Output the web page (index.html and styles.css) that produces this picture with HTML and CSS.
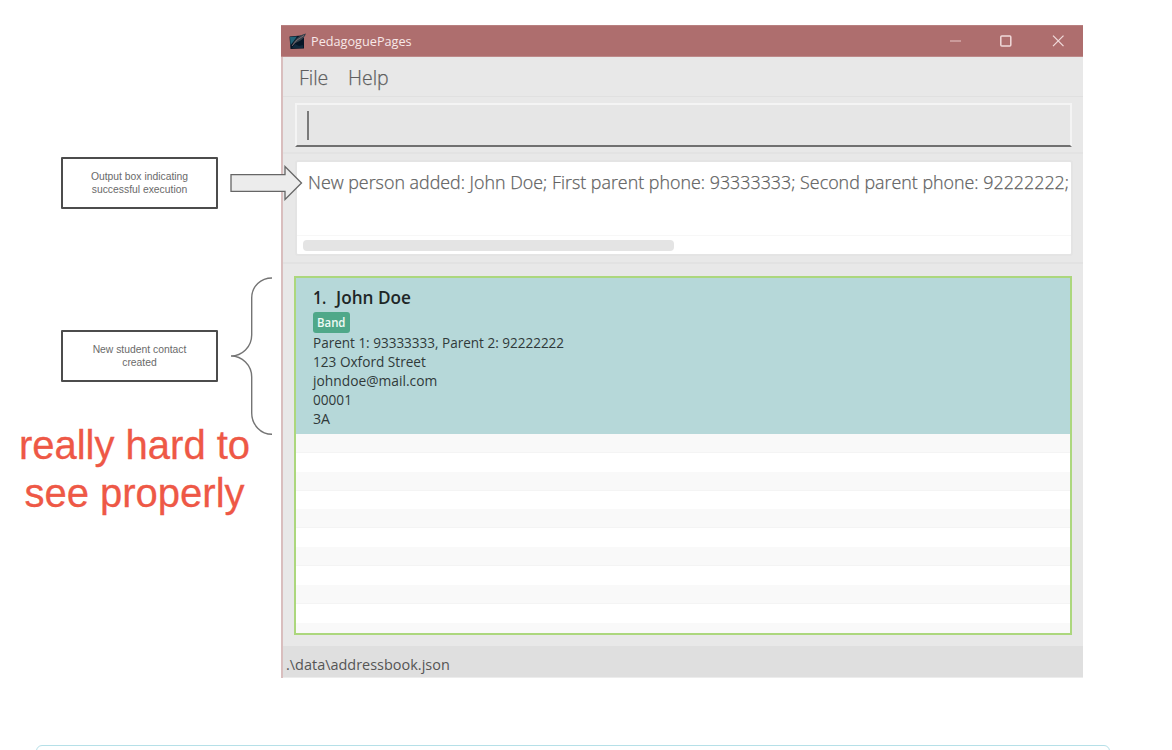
FILE: index.html
```
<!DOCTYPE html>
<html lang="en">
<head>
<meta charset="utf-8">
<title>PedagoguePages</title>
<link rel="stylesheet" href="styles.css">
</head>
<body>
<main class="page">
  <aside class="notes">
    <div class="note">Output box indicating<br>successful execution</div>
    <div class="note">New student contact<br>created</div>
    <p class="remark">really hard to<br>see properly</p>
  </aside>
  <section class="window">
    <header class="titlebar">
      <svg class="logo" width="18" height="17" viewBox="0 0 18 17">
        <path d="M0.5 3.5L12 2.5L15 5V15.5L1.5 16Z" fill="#061526"/>
        <path d="M1 4L8 3.5L4 9L1.6 12Z" fill="#236377"/>
        <path d="M3 15L6 11L10 13L14 12V15Z" fill="#10283c"/>
        <path d="M3 13C5 7 10 2 17 0.5C15 6 10 9 6 10Z" fill="#343f49"/>
        <path d="M3 13L8 7L15 2.5" fill="none" stroke="#9a7d82" stroke-width=".7"/>
      </svg>
      <span class="title"><span class="fit">PedagoguePages</span></span>
      <svg class="controls" width="118" height="14" viewBox="0 0 118 14">
        <path d="M1 7H12" stroke="#dfb9b9" stroke-width="1.2"/>
        <rect x="51.8" y="1.9" width="10" height="10" rx="1" fill="none" stroke="#f0dada" stroke-width="1.5"/>
        <path d="M104 1.6L114.5 12.1M114.5 1.6L104 12.1" stroke="#f0dada" stroke-width="1.3"/>
      </svg>
    </header>
    <nav class="menu"><span class="item file"><span class="fit fit-menu">File</span></span><span class="item"><span class="fit fit-menu">Help</span></span></nav>
    <div class="command"><div class="input"><span class="caret"></span></div></div>
    <div class="result"><div class="output">
      <div class="message"><span class="fit fit-message">New person added: John Doe; First parent phone: 93333333; Second parent phone: 92222222;</span></div>
      <div class="track"><div class="thumb"></div></div>
    </div></div>
    <div class="people"><div class="list">
      <article class="card">
        <h1 class="name"><span class="fit fit-number">1.</span><span class="fit">John Doe</span></h1>
        <div class="tag"><span class="fit fit-tag">Band</span></div>
        <div class="line"><span class="fit fit-phone">Parent 1: 93333333, Parent 2: 92222222</span></div>
        <div class="line"><span class="fit fit-street">123 Oxford Street</span></div>
        <div class="line"><span class="fit fit-mail">johndoe@mail.com</span></div>
        <div class="line"><span class="fit fit-id">00001</span></div>
        <div class="line"><span class="fit">3A</span></div>
      </article>
      <div class="empty"></div>
    </div></div>
    <footer class="status"><span class="fit fit-status">.\data\addressbook.json</span></footer>
  </section>
  <svg class="arrow" width="74" height="36" viewBox="0 0 74 36">
    <path d="M1 9.7H55V1.5L71.5 18L55 34.5V26.3H1Z" fill="#ececec" stroke="#666" stroke-width="1.3"/>
  </svg>
  <svg class="brace" width="44" height="160" viewBox="0 0 44 160">
    <path d="M42 2C31 2 21.7 10 21.7 22V59C21.7 71 12 80 1 80C12 80 21.7 89 21.7 101V137C21.7 149 31 158.3 42 158.3" fill="none" stroke="#747474" stroke-width="1.4"/>
  </svg>
</main>
<div class="panel"></div>
</body>
</html>
```
FILE: styles.css
```
* { box-sizing: border-box; }
body { margin: 0; height: 750px; overflow: hidden; background: #fff; font-family: "Open Sans", "Noto Sans", sans-serif; }
.page { position: relative; display: grid; grid-template-columns: 281px 802px; height: 745px; padding-top: 25px; align-items: start; }
.fit { display: inline-block; white-space: pre; transform-origin: 0 50%; }
.fit-menu { transform: scaleX(.96); }
.fit-message { transform: scaleX(.965); }
.fit-tag { transform: scaleX(.95); }
.fit-phone { transform: scaleX(.953); }
.fit-street { transform: scaleX(.96); }
.fit-mail { transform: scaleX(.972); }
.fit-id { transform: scaleX(.96); }
.fit-status { transform: scaleX(.971); }

.notes { display: flex; flex-direction: column; padding-top: 132px; }
.note { width: 157px; height: 52px; margin: 0 0 122px 61px; padding-top: 12px; border: 2px solid #4c4c4c; border-radius: 1px; color: #6a6a6a; font: 10.35px/12.5px "Liberation Sans", Arial, sans-serif; text-align: center; }
.note + .note { margin-top: -1px; }
.remark { margin: -83px 0 0; width: 269px; color: #ee5846; font: 40px/48px "Liberation Sans", Arial, sans-serif; text-align: center; -webkit-text-stroke: .3px #ee5846; }

.window { height: 653px; display: flex; flex-direction: column; background: #e8e8e8; border-left: 2px solid #d9bebe; }
.titlebar { height: 32px; margin-left: -2px; padding: 0 16px 0 8px; display: flex; align-items: center; background: #ae6e6e; border-top: 1px solid #b88080; border-bottom: 1px solid #bd8989; }
.title { flex: 1; padding-left: 4px; color: #f8e8e8; font-size: 12.7px; line-height: 30px; }
.menu { height: 40px; padding-left: 16px; display: flex; border-bottom: 1px solid #e0e0e0; color: #5c5c5c; font-size: 20.3px; line-height: 40px; font-weight: 300; -webkit-text-stroke: .25px #616161; }
.file { width: 49px; }
.command { height: 57px; padding: 6px 11px 6px 12px; border-bottom: 2px solid #e3e3e3; }
.input { height: 44px; padding: 6px 0 0 10px; background: #e6e6e6; border: 2px solid #f4f4f4; border-bottom-color: #707070; }
.caret { display: block; width: 2px; height: 29px; background: #7a7a7a; }
.result { height: 110px; padding: 6px 10px 6px 12px; border-bottom: 2px solid #e2e2e2; }
.output { height: 96px; border: 2px solid #e4e4e4; border-radius: 3px; background: #fff; display: flex; flex-direction: column; overflow: hidden; }
.message { height: 75px; padding-left: 11px; color: #5c5c5c; font-size: 18.5px; line-height: 40px; font-weight: 300; -webkit-text-stroke: .25px #666; }
.track { flex: 1; padding: 4px 6px 3px; border-top: 1px solid #f7f7f7; }
.thumb { width: 371px; height: 11px; border-radius: 4px; background: #e4e4e4; }
.people { height: 382px; padding: 12px 11px 11px; }
.list { height: 359px; display: flex; flex-direction: column; border: 2px solid #acd77d; background: #fff; }
.card { height: 156px; flex: none; padding: 10px 17px 0; background: #b6d8d9; color: #303a3a; }
.name { display: flex; margin: 0; height: 24px; color: #1e2727; font-size: 17.2px; line-height: 20px; font-weight: 600; }
.fit-number { width: 23px; transform: scaleX(.92); }
.tag { width: 37px; height: 21px; padding-left: 4px; border-radius: 3px; background: #4fa889; color: #eefaf5; font-size: 12px; line-height: 21px; font-weight: 600; }
.line { height: 19.1px; font-size: 14.2px; line-height: 19px; }
.empty { flex: 1; background: repeating-linear-gradient(#f9f9f9 0 18px, #f4f4f4 18px 19px, #fff 19px 37.7px); }
.status { height: 32px; padding-left: 3px; background: #dfdfdf; color: #555; font-size: 14.9px; line-height: 37px; border-bottom: 1px solid #ececec; }

.arrow { position: absolute; left: 230px; top: 165px; }
.brace { position: absolute; left: 230px; top: 276px; }
.panel { height: 30px; margin: 0 62px 0 36px; border: 1px solid #b5e0e8; border-radius: 6px; }
```
